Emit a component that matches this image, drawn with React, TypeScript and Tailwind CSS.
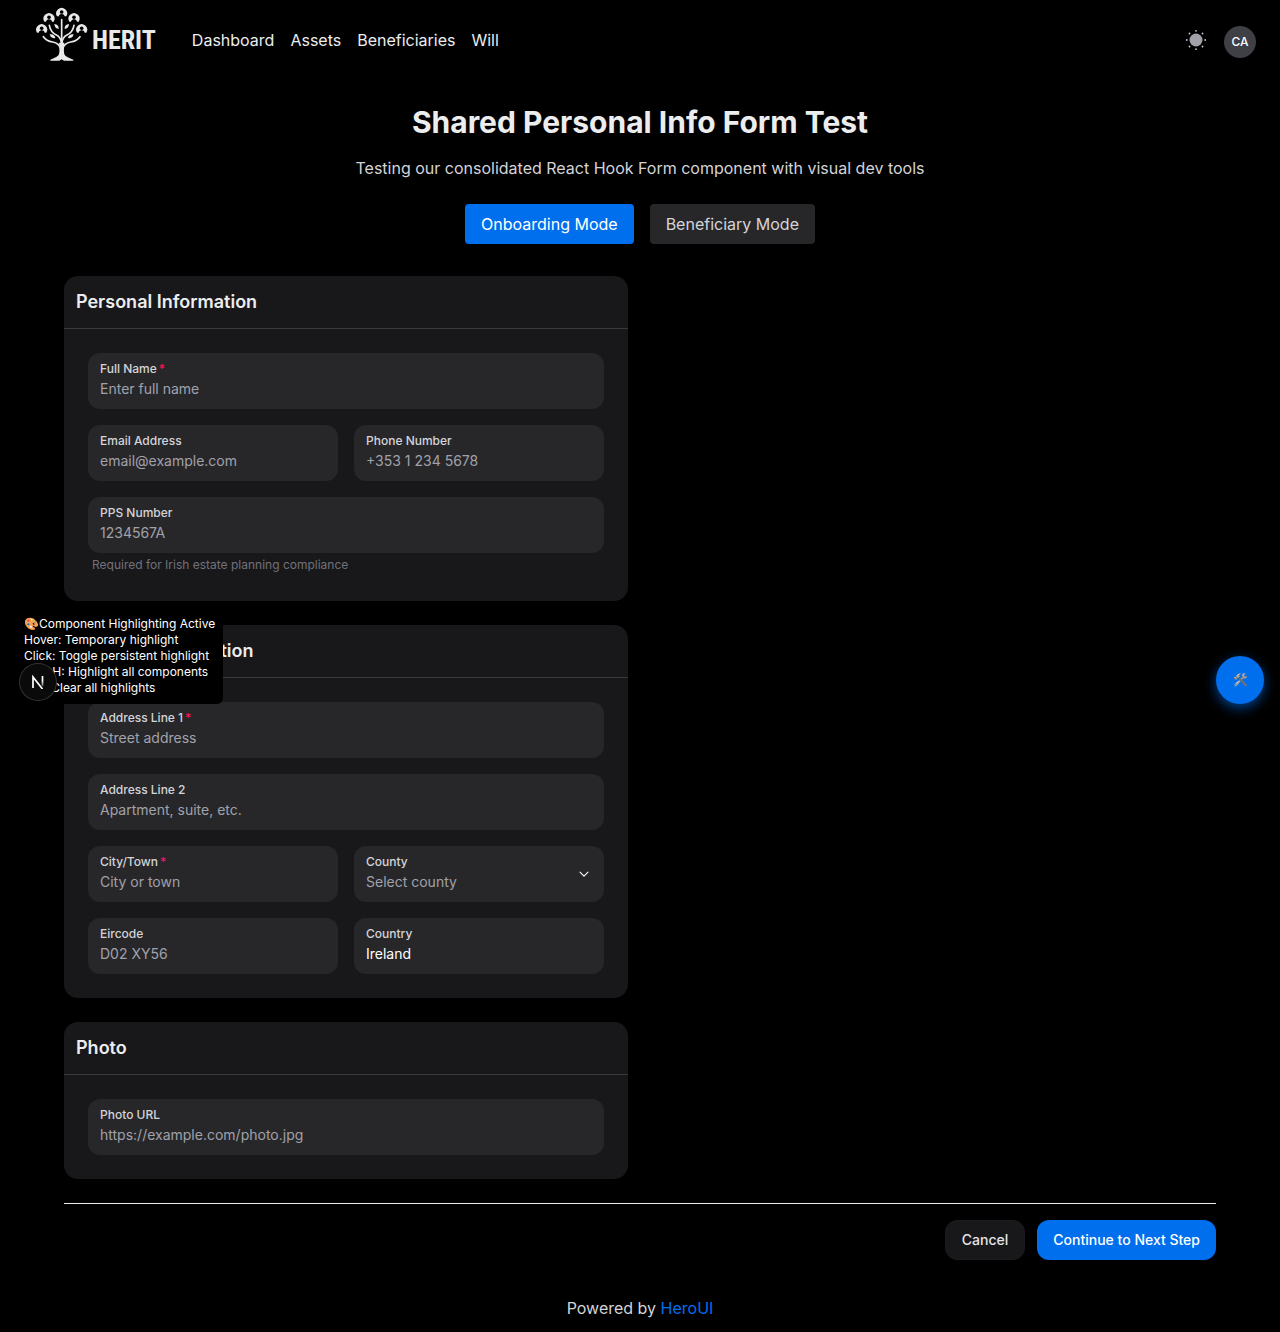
import type { ReactNode } from "react";

const people = [
  [112, 38],
  [74, 54],
  [149, 54],
  [52, 87],
  [172, 87],
];

function TreeLogo() {
  return (
    <svg viewBox="35 21 156 162" className="h-[54px] w-[52px] shrink-0" aria-hidden="true">
      <g fill="none" stroke="#e9e9e9" strokeLinecap="round">
        <path d="M112 59V134" strokeWidth="5" />
        <path d="M75 76Q79 97 96 105Q109 111 111 128" strokeWidth="5" />
        <path d="M149 76Q145 97 128 105Q115 111 113 128" strokeWidth="5" />
        <path d="M57 110Q66 123 85 126Q105 129 109 148" strokeWidth="5" />
        <path d="M167 110Q158 123 139 126Q119 129 115 148" strokeWidth="5" />
      </g>
      <g fill="#e9e9e9">
        <path d="M104 128H120Q117 150 120 163Q124 172 147 179V182H119L112 178L105 182H78V179Q100 172 104 163Q107 150 104 128Z" />
        <path d="M90 72Q104 73 103 87Q91 85 90 72Z" />
        <path d="M134 72Q120 73 121 87Q133 85 134 72Z" />
        <path d="M76 103Q90 101 93 114Q80 117 76 103Z" />
        <path d="M148 103Q134 101 131 114Q144 117 148 103Z" />
      </g>
      {people.map(([x, y]) => (
        <g key={x} transform={`translate(${x} ${y})`}>
          <path d="M-14 11A16.500 16.500 0 1 1 14 11Z" fill="#e9e9e9" />
          <circle cy="-2" r="5.500" fill="#000" />
          <path d="M-9 12Q-8 4 0 4Q8 4 9 12Z" fill="#000" />
        </g>
      ))}
    </svg>
  );
}

function SunIcon() {
  return (
    <svg viewBox="0 0 24 24" className="size-6" fill="#a1a1aa" aria-hidden="true">
      <circle cx="12" cy="12" r="6.500" />
      {[0, 45, 90, 135, 180, 225, 270, 315].map((a) => (
        <circle key={a} cx="12" cy="2.800" r="0.900" fill="#c4c4ca" transform={`rotate(${a} 12 12)`} />
      ))}
    </svg>
  );
}

function Card({ title, children }: { title: string; children: ReactNode }) {
  return (
    <section className="overflow-hidden rounded-[14px] bg-[#18181b]">
      <h2 className="border-b border-[#3a3a3d] p-3 text-lg/7 font-semibold">{title}</h2>
      <div className="flex flex-col gap-4 p-6">{children}</div>
    </section>
  );
}

const boxClass = "relative flex h-14 flex-col gap-0.5 rounded-xl bg-[#27272a] px-3 py-2";
const labelClass = "text-xs/4 font-medium text-[#d4d4d8]";

type FieldProps = {
  id: string;
  label: string;
  placeholder?: string;
  value?: string;
  required?: boolean;
  type?: string;
};

function Field({ id, label, placeholder, value, required, type = "text" }: FieldProps) {
  return (
    <div className={boxClass}>
      <label htmlFor={id} className={labelClass}>
        {label}
        {required && <span className="ml-0.5 text-[#f31260]">*</span>}
      </label>
      <input
        id={id}
        type={type}
        placeholder={placeholder}
        defaultValue={value}
        className="h-5 w-full bg-transparent text-sm/5 text-white outline-none placeholder:text-[#a1a1aa]"
      />
    </div>
  );
}

export default function App() {
  return (
    <div className="relative min-h-screen bg-black font-[Inter,sans-serif] text-[#ecedee]">
      <header className="flex h-20 items-center px-6">
        <a href="#" className="flex items-center gap-1 pb-3 pl-3" aria-label="Herit">
          <TreeLogo />
          <span className="pt-3 font-['Liberation_Sans_Narrow','Roboto_Condensed',sans-serif] text-[26px]/8 font-bold text-[#e9e9e9]">
            HERIT
          </span>
        </a>
        <nav className="ml-9 flex gap-4 text-base/6">
          <a href="#">Dashboard</a>
          <a href="#">Assets</a>
          <a href="#">Beneficiaries</a>
          <a href="#">Will</a>
        </nav>
        <div className="ml-auto flex items-center gap-4">
          <button aria-label="Toggle theme">
            <SunIcon />
          </button>
          <button className="mt-1 size-8 rounded-full bg-[#3f3f46] text-xs font-medium text-white">CA</button>
        </div>
      </header>

      <main className="px-6 pt-6 sm:px-16">
        <div className="text-center">
          <h1 className="text-3xl/9 font-bold">Shared Personal Info Form Test</h1>
          <p className="mt-4 text-base/6 text-[#d4d4d8]">
            Testing our consolidated React Hook Form component with visual dev tools
          </p>
          <div className="mt-6 flex justify-center gap-4 text-base/6">
            <button className="rounded bg-[#006fee] px-4 py-2 text-white">Onboarding Mode</button>
            <button className="rounded bg-[#27272a] px-4 py-2 text-[#d4d4d8]">Beneficiary Mode</button>
          </div>
        </div>

        <form className="mt-8">
          <div className="grid gap-6 lg:grid-cols-2">
            <div className="flex flex-col gap-6">
              <Card title="Personal Information">
                <Field id="name" label="Full Name" placeholder="Enter full name" required />
                <div className="grid grid-cols-2 gap-4">
                  <Field id="email" type="email" label="Email Address" placeholder="email@example.com" />
                  <Field id="phone" type="tel" label="Phone Number" placeholder="+353 1 234 5678" />
                </div>
                <div>
                  <Field id="pps" label="PPS Number" placeholder="1234567A" />
                  <p className="p-1 text-xs/4 text-[#71717a]">Required for Irish estate planning compliance</p>
                </div>
              </Card>
              <Card title="Address Information">
                <Field id="line1" label="Address Line 1" placeholder="Street address" required />
                <Field id="line2" label="Address Line 2" placeholder="Apartment, suite, etc." />
                <div className="grid grid-cols-2 gap-4">
                  <Field id="city" label="City/Town" placeholder="City or town" required />
                  <div className={boxClass}>
                    <label htmlFor="county" className={labelClass}>
                      County
                    </label>
                    <select
                      id="county"
                      className="h-5 w-full appearance-none bg-transparent text-sm/5 text-[#a1a1aa] outline-none"
                    >
                      <option>Select county</option>
                    </select>
                    <svg
                      viewBox="0 0 16 16"
                      className="pointer-events-none absolute top-5 right-3 size-4"
                      fill="none"
                      stroke="#fff"
                      strokeWidth="1.100"
                      strokeLinecap="round"
                      strokeLinejoin="round"
                      aria-hidden="true"
                    >
                      <path d="M4 6.200L8 10.200L12 6.200" />
                    </svg>
                  </div>
                  <Field id="eircode" label="Eircode" placeholder="D02 XY56" />
                  <Field id="country" label="Country" value="Ireland" />
                </div>
              </Card>
              <Card title="Photo">
                <Field id="photo" type="url" label="Photo URL" placeholder="https://example.com/photo.jpg" />
              </Card>
            </div>
          </div>
          <div className="mt-6 flex justify-end gap-3 border-t border-[#ecedee] pt-4 text-sm/5">
            <button type="button" className="h-10 rounded-xl border border-[#1c1c1f] bg-[#18181b] px-4 font-medium text-[#e4e4e7]">
              Cancel
            </button>
            <button type="button" className="h-10 rounded-xl bg-[#006fee] px-4 font-medium text-white">
              Continue to Next Step
            </button>
          </div>
        </form>
      </main>

      <footer className="pt-9 pb-3 text-center text-base/6 text-[#d4d4d8]">
        Powered by{" "}
        <a href="#" className="text-[#006fee]">
          HeroUI
        </a>
      </footer>

      <div className="absolute top-[608px] left-4 rounded-md bg-black p-2 text-xs/4 text-white">
        <p>🎨Component Highlighting Active</p>
        <p>Hover: Temporary highlight</p>
        <p>Click: Toggle persistent highlight</p>
        <p>Ctrl+H: Highlight all components</p>
        <p>Esc: Clear all highlights</p>
      </div>
      <button
        aria-label="Open framework tools"
        className="absolute top-[664px] left-5 flex size-9 items-center justify-center rounded-full bg-[#0a0a0a] ring-1 ring-[#333]"
      >
        <svg viewBox="0 0 14 14" className="size-3.5" fill="none" strokeWidth="1.700" aria-hidden="true">
          <defs>
            <linearGradient id="fade" gradientUnits="userSpaceOnUse" x1="0" y1="1" x2="0" y2="13">
              <stop offset="0.400" stopColor="#fff" />
              <stop offset="1" stopColor="#fff" stopOpacity="0.100" />
            </linearGradient>
          </defs>
          <path d="M2 13V2L11.500 14" stroke="#fff" />
          <path d="M11.500 1V11" stroke="url(#fade)" />
        </svg>
      </button>
      <button
        aria-label="Dev tools"
        className="absolute top-[656px] right-4 flex size-12 items-center justify-center rounded-full bg-[#006fee] text-xs/4 shadow-[0_4px_12px_rgba(0,111,238,0.6)]"
      >
        <span className="grayscale">🛠️</span>
      </button>
    </div>
  );
}
